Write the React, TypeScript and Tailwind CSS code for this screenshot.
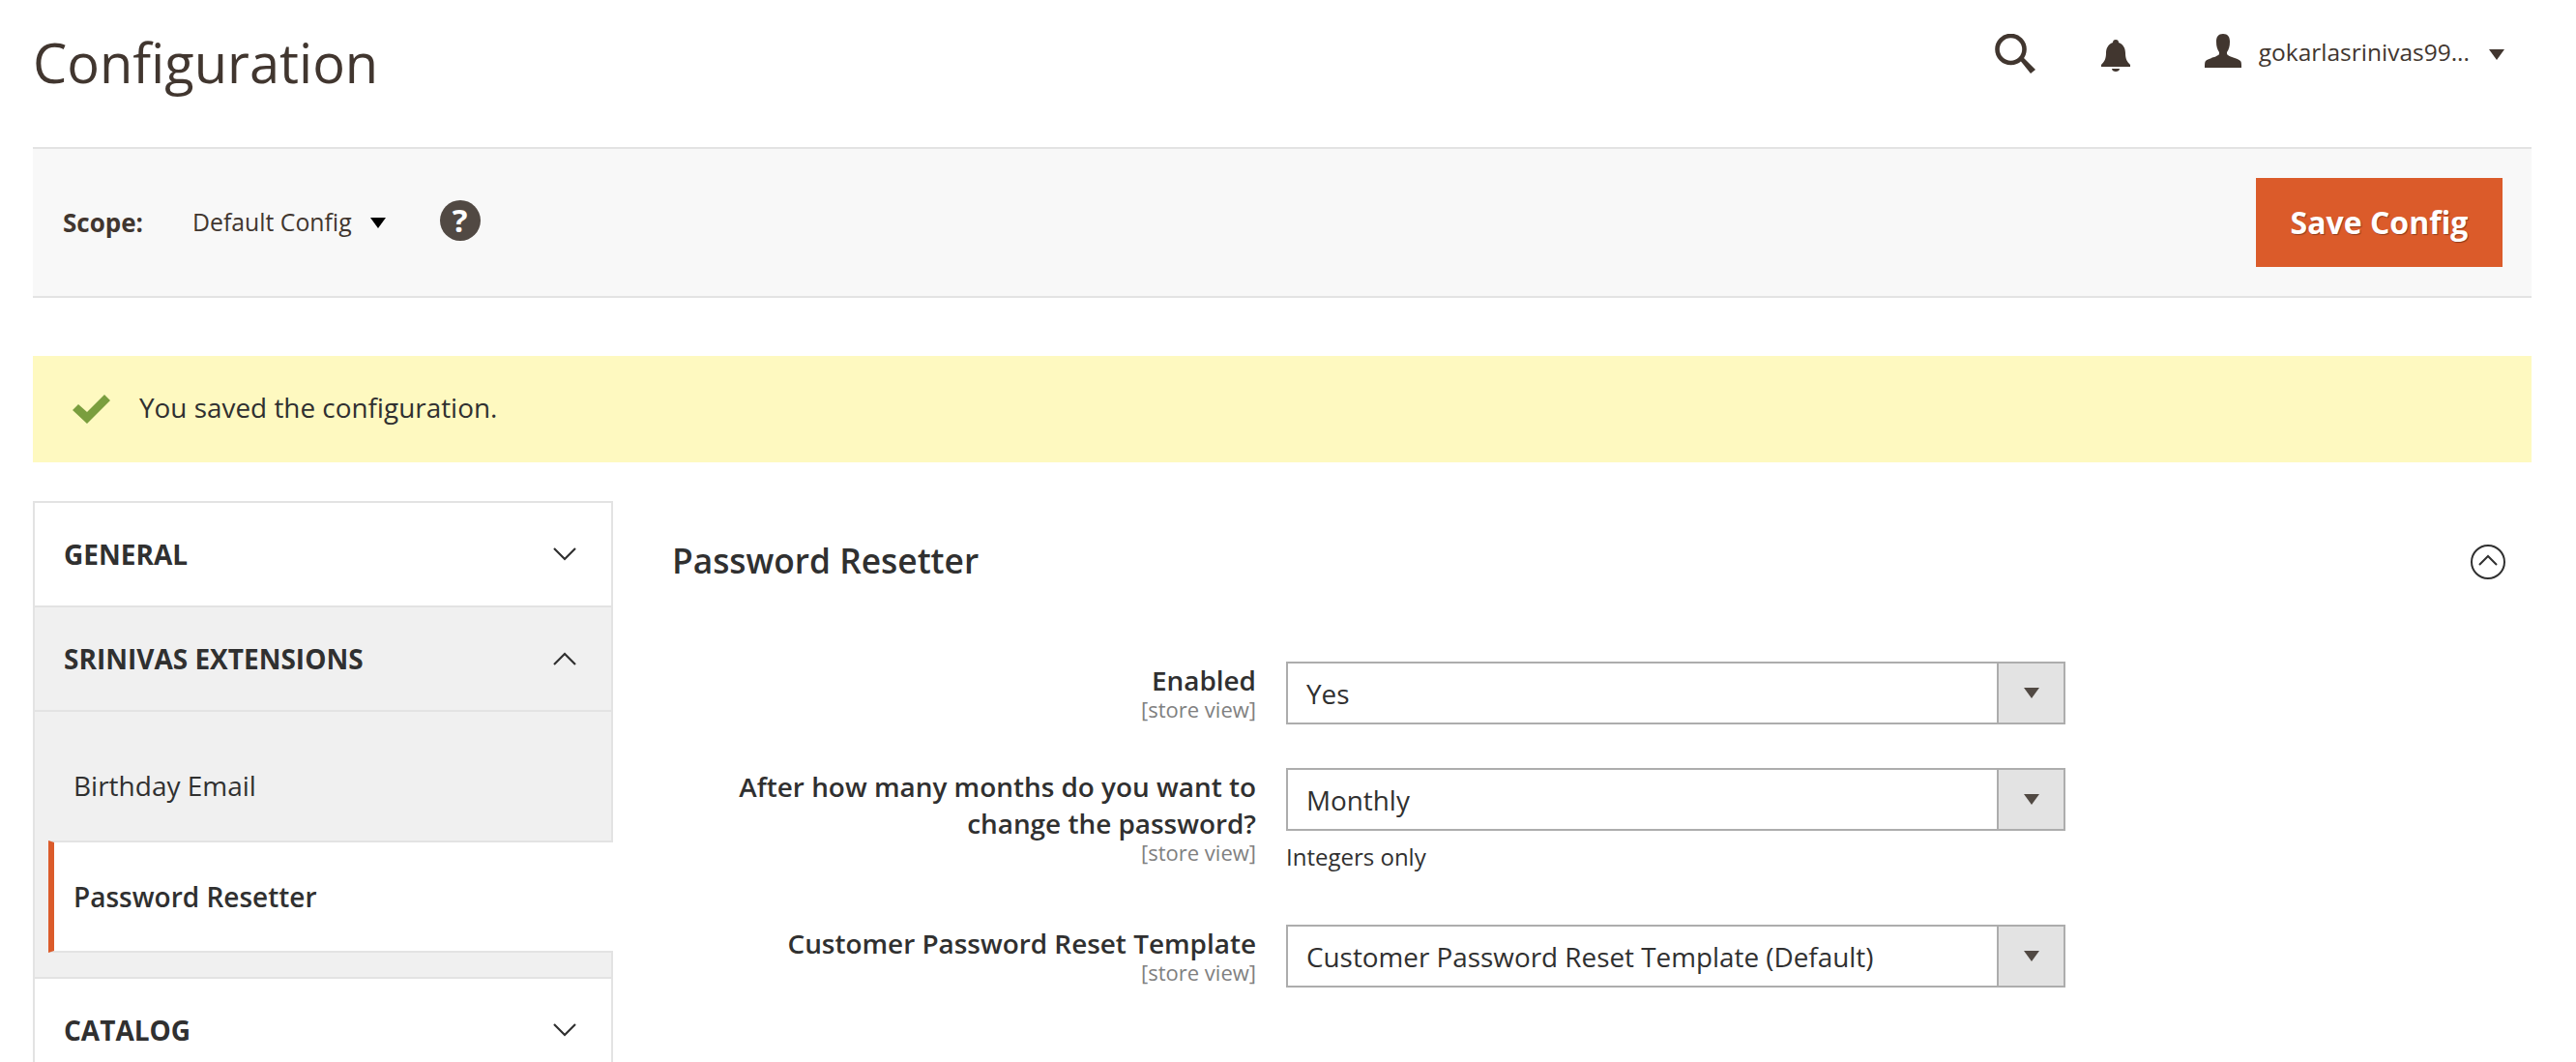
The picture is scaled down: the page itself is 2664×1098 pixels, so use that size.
import React from "react";

const font = { fontFamily: '"Open Sans", sans-serif' };

function Chevron({ up = false }: { up?: boolean }) {
  return (
    <svg width="24" height="14" viewBox="0 0 24 14" fill="none" stroke="#303030" strokeWidth="2.2">
      <path d={up ? "M1 13 L12 2 L23 13" : "M1 1 L12 12 L23 1"} />
    </svg>
  );
}

function Caret({ color = "#000000" }: { color?: string }) {
  return (
    <svg width="16" height="11" viewBox="0 0 16 11">
      <path d="M0 0 H16 L8 11 Z" fill={color} />
    </svg>
  );
}

function Select({ value }: { value: string }) {
  return (
    <div className="flex h-[65px] w-[806px] border-2 border-[#adadad] bg-white">
      <div className="flex flex-1 items-center pl-[19px] pt-[2px] text-[27.85px] text-[#303030]">{value}</div>
      <div className="flex w-[69px] items-center justify-center border-l-2 border-[#adadad] bg-[#e3e3e3]">
        <Caret color="#514943" />
      </div>
    </div>
  );
}

function Label({ lines }: { lines: string[] }) {
  return (
    <div className="w-[603px] text-right">
      {lines.map((l) => (
        <div key={l} className="text-[27.9px] leading-[38px] font-semibold text-[#303030]">
          {l}
        </div>
      ))}
      <div className="text-[22px] leading-[22px] text-[#808080]">[store view]</div>
    </div>
  );
}

function SideHead({ title, up, tone }: { title: string; up?: boolean; tone: string }) {
  return (
    <div className={`flex h-[106px] items-center justify-between pl-[30px] pr-[36px] ${tone}`}>
      <span className="text-[28px] font-bold text-[#303030]">{title}</span>
      <Chevron up={up} />
    </div>
  );
}

export default function App() {
  return (
    <div className="h-[1098px] overflow-hidden bg-white pl-[34px] pr-[46px]" style={font}>
      <header className="flex h-[152px] items-start justify-between">
        <h1 className="mt-[25px] text-[56px] leading-[78px] text-[#41362f]">Configuration</h1>
        <div className="mr-[28px] mt-[35px] flex items-start">
          <svg width="42" height="41" viewBox="0 0 42 41" fill="none" stroke="#41362f">
            <circle cx="16.5" cy="16" r="14" strokeWidth="4.6" />
            <path d="M25 26 L37 41 L42 37 L29 24 Z" fill="#41362f" strokeWidth="0" />
          </svg>
          <svg className="ml-[68px] mt-[6px]" width="30" height="33" viewBox="0 0 30 33" fill="#41362f">
            <path d="M15 0 C17 0 18 1 18 3 C23 5 25 9 25 14 C25 20 27 23 30 26 V28 H0 V26 C3 23 5 20 5 14 C5 9 7 5 12 3 C12 1 13 0 15 0 Z" />
            <path d="M11 30 H19 C19 32 17 33 15 33 C13 33 11 32 11 30 Z" />
          </svg>
          <svg className="ml-[77px]" width="38" height="35" viewBox="0 0 38 35" fill="#41362f">
            <path d="M19 0 C24 0 26 3 26 8 C26 13 25 16 23 19 V21 C25 24 34 25 37 28 C38 29 38 31 38 35 H0 C0 31 0 29 1 28 C4 25 13 24 15 21 V19 C13 16 12 13 12 8 C12 3 14 0 19 0 Z" />
          </svg>
          <span className="ml-[18px] mt-[2px] text-[24.5px] leading-[34px] text-[#41362f]">gokarlasrinivas99...</span>
          <span className="ml-[20px] mt-[16px] flex">
            <Caret color="#41362f" />
          </span>
        </div>
      </header>

      <section className="flex h-[156px] items-center justify-between border-y-2 border-[#e3e3e3] bg-[#f8f8f8] pl-[31px] pr-[30px]">
        <div className="flex items-center">
          <span className="w-[134px] text-[26px] font-bold text-[#41362f]">Scope:</span>
          <span className="text-[24.8px] text-[#41362f]">Default Config</span>
          <span className="ml-[19px] flex">
            <Caret />
          </span>
          <span className="-mt-[5px] ml-[56px] flex h-[42px] w-[42px] items-center justify-center rounded-full bg-[#514943] text-[33px] leading-none font-bold text-white">
            ?
          </span>
        </div>
        <button className="h-[92px] w-[255px] bg-[#db5b2a] text-[32px] font-bold text-white [text-shadow:1px_1px_1px_rgba(0,0,0,0.35)]">
          Save Config
        </button>
      </section>

      <section className="mt-[60px] flex h-[110px] items-center bg-[#fef9c0] pl-[41px]">
        <svg width="39" height="30" viewBox="0 0 39 30" fill="#7a9e3e">
          <path d="M0 16 L6 10 L15 18 L33 0 L39 6 L15 30 Z" />
        </svg>
        <span className="mb-[2px] ml-[30px] text-[27.9px] text-[#303030]">You saved the configuration.</span>
      </section>

      <main className="mt-[40px] flex">
        <nav className="w-[600px] shrink-0 border-x-2 border-t-2 border-[#e3e3e3]">
          <SideHead title="GENERAL" tone="bg-white" />
          <div className="border-t-2 border-[#e3e3e3]">
            <SideHead title="SRINIVAS EXTENSIONS" up tone="bg-[#f0f0f0]" />
          </div>
          <div className="border-t-2 border-[#e3e3e3] bg-[#f0f0f0]">
            <div className="flex h-[133px] items-center pl-[40px] pt-[19px] text-[28px] text-[#303030]">Birthday Email</div>
            <div className="-mr-[2px] ml-[14px] flex h-[116px] items-center border-y-2 border-l-[6px] border-[#e3e3e3] border-l-[#db5b2a] bg-white pl-[20px] text-[28px] font-semibold text-[#303030]">
              Password Resetter
            </div>
            <div className="h-[25px]" />
          </div>
          <div className="border-t-2 border-[#e3e3e3]">
            <SideHead title="CATALOG" tone="bg-white" />
          </div>
        </nav>

        <div className="ml-[61px] flex-1">
          <div className="mt-[30px] flex h-[62px] items-center justify-between pr-[27px]">
            <h2 className="text-[35.3px] font-semibold text-[#303030]">Password Resetter</h2>
            <svg className="mt-[3px]" width="36" height="36" viewBox="0 0 36 36" fill="none" stroke="#303030" strokeWidth="2">
              <circle cx="18" cy="18" r="17" />
              <path d="M9 21 L18 12 L27 21" />
            </svg>
          </div>

          <div className="ml-[1px] mt-[74px] flex gap-[31px]">
            <Label lines={["Enabled"]} />
            <Select value="Yes" />
          </div>
          <div className="ml-[1px] mt-[45px] flex gap-[31px]">
            <Label lines={["After how many months do you want to", "change the password?"]} />
            <div>
              <Select value="Monthly" />
              <div className="mt-[11px] text-[24px] leading-[32px] text-[#303030]">Integers only</div>
            </div>
          </div>
          <div className="ml-[1px] mt-[54px] flex gap-[31px]">
            <Label lines={["Customer Password Reset Template"]} />
            <Select value="Customer Password Reset Template (Default)" />
          </div>
        </div>
      </main>
    </div>
  );
}
